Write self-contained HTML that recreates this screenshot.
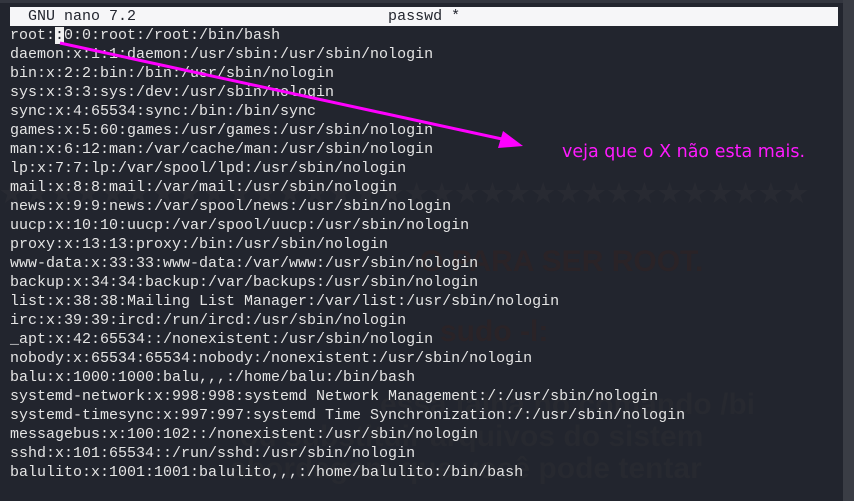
<!DOCTYPE html>
<html><head><meta charset="utf-8"><style>
html,body{margin:0;padding:0;}
body{width:854px;height:501px;background:#22252e;position:relative;overflow:hidden;font-family:"Liberation Mono","DejaVu Sans Mono",monospace;}
.top{position:absolute;left:0;top:0;width:854px;height:3px;background:#33363f;}
.bar{position:absolute;left:10px;top:7px;width:828px;height:19px;background:#f6f6f8;color:#22252e;font-size:15px;line-height:19px;white-space:pre;}
.sb{position:absolute;left:843px;top:0;width:11px;height:501px;background:#3a3d45;}
pre{position:absolute;left:10px;top:26px;margin:0;color:#e4e4e4;font-size:15px;line-height:19px;font-family:inherit;}
.cur{background:#f0f0f0;color:#22252e;}
.ghost{position:absolute;font-family:"Liberation Sans",sans-serif;font-weight:bold;color:#272930;white-space:nowrap;}
.note{position:absolute;left:562px;top:142px;color:#ff1aff;font-family:"DejaVu Sans","Liberation Sans",sans-serif;font-size:17.5px;}
</style></head><body>
<div class="top"></div>
<div class="ghost" style="left:0;top:178px;font-size:26px;letter-spacing:2px;color:#282a32">★★★★★★★★★★★★★★★★★★★★★★★★★★★★★★★★</div>
<div class="ghost" style="left:420px;top:245px;font-size:30px;color:#2a2327">O PARA SER ROOT.</div>
<div class="ghost" style="left:440px;top:315px;font-size:30px;color:#2a2327">sudo -l:</div>
<div class="ghost" style="left:380px;top:388px;font-size:30px">essa falha no comando /bi</div>
<div class="ghost" style="left:240px;top:420px;font-size:30px">ou substituir arquivos do sistem</div>
<div class="ghost" style="left:230px;top:452px;font-size:30px">abordagem que você pode tentar</div>
<div class="bar">  GNU nano 7.2                            passwd *</div>
<div class="sb"></div>
<pre>root:<span class="cur">:</span>0:0:root:/root:/bin/bash
daemon:x:1:1:daemon:/usr/sbin:/usr/sbin/nologin
bin:x:2:2:bin:/bin:/usr/sbin/nologin
sys:x:3:3:sys:/dev:/usr/sbin/nologin
sync:x:4:65534:sync:/bin:/bin/sync
games:x:5:60:games:/usr/games:/usr/sbin/nologin
man:x:6:12:man:/var/cache/man:/usr/sbin/nologin
lp:x:7:7:lp:/var/spool/lpd:/usr/sbin/nologin
mail:x:8:8:mail:/var/mail:/usr/sbin/nologin
news:x:9:9:news:/var/spool/news:/usr/sbin/nologin
uucp:x:10:10:uucp:/var/spool/uucp:/usr/sbin/nologin
proxy:x:13:13:proxy:/bin:/usr/sbin/nologin
www-data:x:33:33:www-data:/var/www:/usr/sbin/nologin
backup:x:34:34:backup:/var/backups:/usr/sbin/nologin
list:x:38:38:Mailing List Manager:/var/list:/usr/sbin/nologin
irc:x:39:39:ircd:/run/ircd:/usr/sbin/nologin
_apt:x:42:65534::/nonexistent:/usr/sbin/nologin
nobody:x:65534:65534:nobody:/nonexistent:/usr/sbin/nologin
balu:x:1000:1000:balu,,,:/home/balu:/bin/bash
systemd-network:x:998:998:systemd Network Management:/:/usr/sbin/nologin
systemd-timesync:x:997:997:systemd Time Synchronization:/:/usr/sbin/nologin
messagebus:x:100:102::/nonexistent:/usr/sbin/nologin
sshd:x:101:65534::/run/sshd:/usr/sbin/nologin
balulito:x:1001:1001:balulito,,,:/home/balulito:/bin/bash</pre>
<svg style="position:absolute;left:0;top:0" width="854" height="501">
<line x1="60" y1="43" x2="502" y2="139" stroke="#ff00ff" stroke-width="3"/>
<polygon points="523,146 498,148 503,131" fill="#ff00ff"/>
</svg>
<div class="note">veja que o X não esta mais.</div>
</body></html>
